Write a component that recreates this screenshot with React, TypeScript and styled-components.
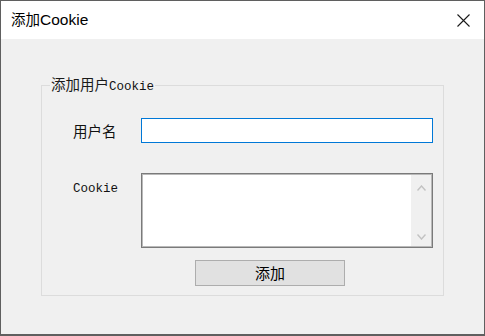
import React from 'react'
import styled, { createGlobalStyle } from 'styled-components'

const GlobalStyle = createGlobalStyle`
  html, body {
    margin: 0;
    padding: 0;
    background: #ffffff;
  }
  * {
    box-sizing: border-box;
  }
`

const Window = styled.div`
  width: 485px;
  height: 336px;
  display: flex;
  flex-direction: column;
  border: 1px solid #5f5f5f;
  border-bottom-width: 2px;
  background: #f0f0f0;
  font-family: 'Noto Sans CJK SC', 'Liberation Sans', sans-serif;
  color: #000;
`

const TitleBar = styled.div`
  height: 38px;
  flex: 0 0 38px;
  display: flex;
  align-items: center;
  justify-content: space-between;
  padding: 0 14px 0 10px;
  background: #ffffff;
`

const Title = styled.div`
  font-size: 14.5px;
  line-height: 20px;
  padding-bottom: 1px;
`

const TitleLatin = styled.span`
  font-family: 'Liberation Sans', sans-serif;
  font-size: 15.5px;
`

const CloseButton = styled.div`
  width: 13px;
  height: 13px;
  display: flex;
  align-items: center;
  justify-content: center;
  margin-top: 1px;
`

const Body = styled.div`
  flex: 1;
  padding: 37px 0 0 40px;
`

const Group = styled.fieldset`
  width: 403px;
  height: 220px;
  margin: 0;
  padding: 24px 10px 8px 31px;
  border: 1px solid #dcdcdc;
  display: grid;
  grid-template-columns: 68px 292px;
  grid-template-rows: 25px 75px 26px;
  row-gap: 30px;
  align-content: start;

  & > :nth-child(n + 7) {
    margin-top: -18px;
  }
`

const Legend = styled.legend`
  padding: 0 1px;
  margin-left: -23px;
  height: 18px;
  font-size: 14.5px;
  line-height: 16px;
  color: #1a1a1a;
`

const Mono = styled.span`
  font-family: 'Liberation Mono', monospace;
  font-size: 12.5px;
  color: #111;
`

const Label = styled.div<{ $top?: boolean }>`
  font-size: 14.5px;
  line-height: 20px;
  align-self: ${p => (p.$top ? 'start' : 'center')};
  padding-top: ${p => (p.$top ? '3px' : '0')};
  color: #111;
`

const TextInput = styled.input`
  width: 292px;
  height: 25px;
  border: 1px solid #0078d7;
  background: #ffffff;
  outline: none;
  padding: 0 4px;
  font-size: 13px;
`

const AreaBox = styled.div`
  width: 292px;
  height: 75px;
  display: flex;
  border: 1px solid #7a7a7a;
  box-shadow: inset 0 0 0 1px #b9b9b9;
  background: #ffffff;
  padding: 1px;
`

const TextArea = styled.textarea`
  flex: 1;
  border: none;
  outline: none;
  resize: none;
  background: #ffffff;
  font-size: 13px;
`

const ScrollTrack = styled.div`
  width: 20px;
  display: flex;
  flex-direction: column;
  justify-content: space-between;
  align-items: center;
  padding: 10px 0 6px;
  background: #f0f0f0;
`

const Empty = styled.div``

const AddButton = styled.button`
  width: 150px;
  height: 26px;
  margin-left: 54px;
  border: 1px solid #adadad;
  background: #e1e1e1;
  font-family: 'Noto Sans CJK SC', sans-serif;
  font-size: 15px;
  line-height: 20px;
  color: #000;
  padding: 0;
`

const Chevron = ({ up }: { up?: boolean }) => (
  <svg width="9" height="6" viewBox="0 0 9 6">
    <path
      d={up ? 'M0.5 5.5 L4.5 1 L8.5 5.5' : 'M0.5 0.5 L4.5 5 L8.5 0.5'}
      fill="none"
      stroke="#c2c2c2"
      strokeWidth="1.4"
    />
  </svg>
)

export default function App() {
  return (
    <>
      <GlobalStyle />
      <Window>
        <TitleBar>
          <Title>
            添加<TitleLatin>Cookie</TitleLatin>
          </Title>
          <CloseButton>
            <svg width="13" height="13" viewBox="0 0 13 13">
              <path d="M0.5 0.5 L12.5 12.5 M12.5 0.5 L0.5 12.5" stroke="#1a1a1a" strokeWidth="1.1" />
            </svg>
          </CloseButton>
        </TitleBar>
        <Body>
          <Group>
            <Legend>
              添加用户<Mono>Cookie</Mono>
            </Legend>
            <Label>用户名</Label>
            <TextInput />
            <Label $top>
              <Mono>Cookie</Mono>
            </Label>
            <AreaBox>
              <TextArea />
              <ScrollTrack>
                <Chevron up />
                <Chevron />
              </ScrollTrack>
            </AreaBox>
            <Empty />
            <AddButton>添加</AddButton>
          </Group>
        </Body>
      </Window>
    </>
  )
}
